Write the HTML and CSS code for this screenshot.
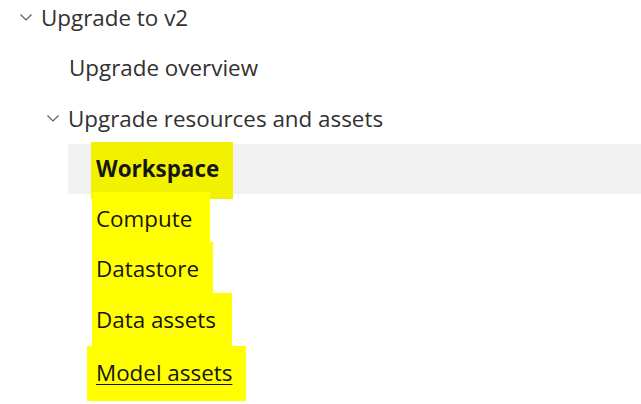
FILE: index.html
```html
<!DOCTYPE html>
<html>
<head>
<meta charset="utf-8">
<link rel="stylesheet" href="styles.css">
</head>
<body>
<nav class="toc">
  <div class="row lvl0">
    <svg class="chev" width="12" height="7" viewBox="0 0 12 7"><path d="M0.5 0.5 L6 6 L11.5 0.5" fill="none" stroke="#605e5c" stroke-width="1.2"/></svg>
    <span class="label">Upgrade to v2</span>
  </div>
  <div class="row lvl1 leaf">
    <span class="label">Upgrade overview</span>
  </div>
  <div class="row lvl1">
    <svg class="chev" width="12" height="7" viewBox="0 0 12 7"><path d="M0.5 0.5 L6 6 L11.5 0.5" fill="none" stroke="#605e5c" stroke-width="1.2"/></svg>
    <span class="label">Upgrade resources and assets</span>
  </div>
  <div class="row lvl2 selected">
    <span class="label hl hl-ws">Workspace</span>
  </div>
  <div class="row lvl2">
    <span class="label hl hl-compute">Compute</span>
  </div>
  <div class="row lvl2">
    <span class="label hl hl-ds">Datastore</span>
  </div>
  <div class="row lvl2">
    <span class="label hl hl-da">Data assets</span>
  </div>
  <div class="row lvl2 last">
    <span class="label hl hl-ma link">Model assets</span>
  </div>
</nav>
</body>
</html>
```
FILE: styles.css
```css
html, body {
  margin: 0;
  padding: 0;
  background: #ffffff;
}
body {
  font-family: "Open Sans", "Noto Sans", sans-serif;
  font-size: 22.4px;
  color: #323130;
  overflow: hidden;
}
.toc {
  display: flex;
  flex-direction: column;
  margin-top: -8px;
}
.row {
  height: 50.5px;
  display: flex;
  align-items: center;
  white-space: nowrap;
}
.row.last { height: 56px; }
.lvl0 { padding-left: 20px; }
.lvl1 { padding-left: 47px; }
.lvl1.leaf { padding-left: 69px; }
.lvl2 { padding-left: 96px; }
.chev {
  margin-right: 9px;
  flex: none;
}
.lvl2.selected {
  background: #f1f1f1;
  margin-left: 68px;
  padding-left: 28px;
}
.selected .label {
  font-weight: 700;
}
.hl {
  color: #161616;
  background: #ffff00;
  padding: 11px 14px 13px 4px;
  margin-left: -4px;
}
.selected .hl { background: #f2f200; padding-bottom: 15px; margin-bottom: -4px; }
.hl-ws { margin-left: -5px; padding-left: 5px; }
.hl-compute { padding-right: 18px; }
.hl-da { padding-right: 16px; }
.hl-ma { margin-left: -9px; padding-left: 9px; padding-right: 14px; }
.link { text-decoration: underline; text-decoration-thickness: 1px; text-underline-offset: 3px; }
```
